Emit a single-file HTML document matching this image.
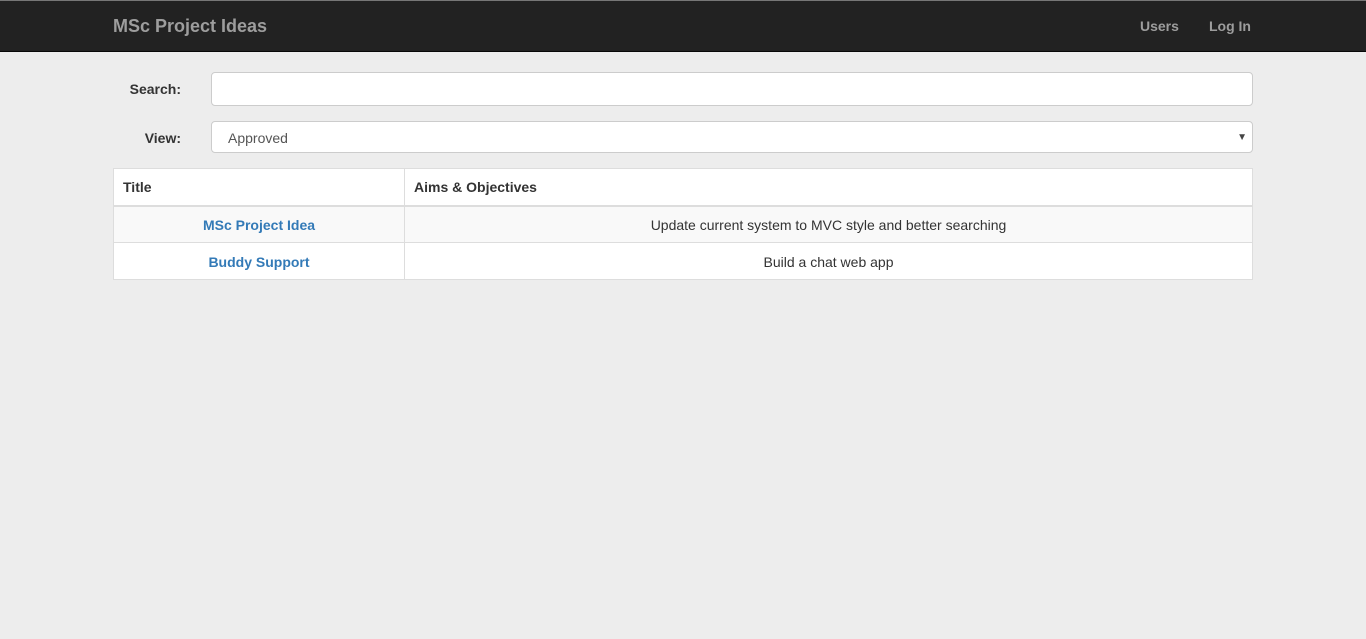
<!DOCTYPE html>
<html><head><meta charset="utf-8"><style>
*{box-sizing:border-box;margin:0;padding:0}
body{width:1366px;height:639px;background:#ededed;font-family:"Liberation Sans",Arial,sans-serif;font-size:14px;color:#333;position:relative;overflow:hidden}
.nav{position:absolute;left:0;top:0;width:1366px;height:52px;background:#222;border-top:1px solid #777;border-bottom:1px solid #080808}
.brand{position:absolute;left:113px;top:15px;font-size:18px;font-weight:bold;color:#9d9d9d}
.nl{position:absolute;top:17px;font-size:14px;font-weight:bold;color:#9d9d9d}
.lbl{position:absolute;font-weight:bold;font-size:14px;text-align:right;width:80px}
.inp{position:absolute;left:211px;width:1042px;background:#fff;border:1px solid #ccc;border-radius:4px}
table{position:absolute;left:113px;top:168px;width:1140px;border-collapse:collapse;background:#fff}
td,th{border:1px solid #ddd;height:37px;padding:0 9px;font-size:14px}
th{text-align:left;font-weight:bold;border-bottom:2px solid #ddd}
td{text-align:center;padding-top:1px}
tr.s td{background:#f9f9f9}
a{color:#337ab7;font-weight:bold;text-decoration:none}
</style></head><body>
<div class="nav"><div class="brand">MSc Project Ideas</div>
<div class="nl" style="left:1140px">Users</div><div class="nl" style="left:1209px">Log In</div></div>
<div class="lbl" style="left:101px;top:81px">Search:</div>
<div class="inp" style="top:72px;height:34px"></div>
<div class="lbl" style="left:101px;top:130px">View:</div>
<div class="inp" style="top:121px;height:32px;padding:8px 16px;color:#555">Approved<span style="position:absolute;right:5px;top:10px;font-size:10px;color:#444">▼</span></div>
<table>
<tr><th style="width:291px">Title</th><th>Aims &amp; Objectives</th></tr>
<tr class="s"><td><a>MSc Project Idea</a></td><td>Update current system to MVC style and better searching</td></tr>
<tr><td><a>Buddy Support</a></td><td>Build a chat web app</td></tr>
</table>
</body></html>
